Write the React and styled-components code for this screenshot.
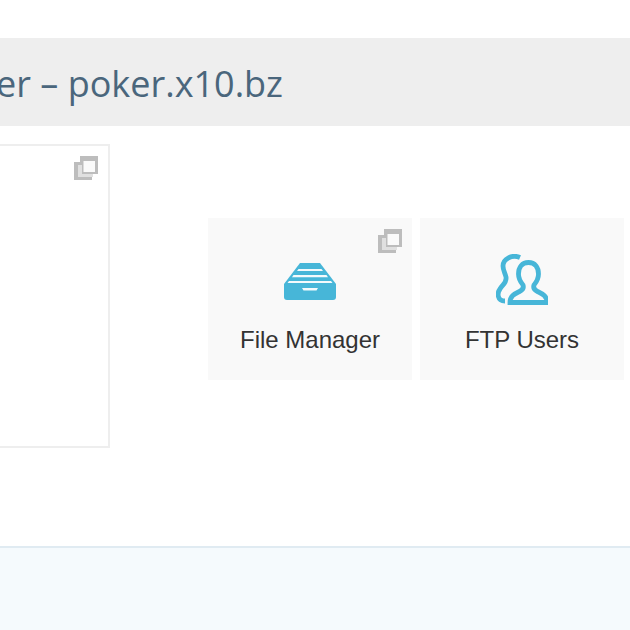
import styled, { createGlobalStyle } from "styled-components";

const GlobalStyle = createGlobalStyle`
  html, body {
    margin: 0;
    padding: 0;
    background: #fff;
  }
`;

function WindowIcon() {
  return (
    <WindowSvg viewBox="0 0 24 24">
      <path d="M6 0h18v18h-6v6H0V6h6z" fill="#bdbdbd" />
      <path d="M9.500 5h11.500v11H9.500z" fill="#fafafa" />
      <path d="M4 9h4v9h11v3H4z" fill="#e0e0e0" />
    </WindowSvg>
  );
}

function DrawerIcon() {
  return (
    <IconSvg viewBox="0 -3 52 40" width="52" height="40">
      <path d="M16 0h20l16 21H0z" fill="#47b6d8" />
      <path d="M14.500 6h23l1.500 2H13zM9.500 12h33l1.500 2.200H8zM5 18h42l1.500 2H3.500z" fill="#f4fafc" />
      <path d="M0 21h52v13q0 3-3 3H3q-3 0-3-3z" fill="#47b6d8" />
      <path d="M18 25h16l-1.500 2.500h-13z" fill="#f4fafc" />
    </IconSvg>
  );
}

function UsersIcon() {
  return (
    <IconSvg viewBox="0 0 52 52" width="52" height="52">
      <g fill="none" stroke="#47b6d8" strokeWidth="4.800">
        <path d="M24 3.500C16 0 7 5 7 12c0 4 2 7 3 11C11 29 6 31 4 35C1 39 1 47 9 47" />
        <path d="M32.500 8.500c-6.500 0-10 5-10 11.500 0 5 2 8 4.500 11 1 3-.5 5-3.500 6.500-4 2-9.500 4-9.500 11h37c0-7-5.500-9-9.500-11-3-1.500-4.500-3.500-3.500-6.500 2.500-3 4.500-6 4.500-11 0-6.500-3.500-11.500-10-11.500z" />
      </g>
    </IconSvg>
  );
}

export default function App() {
  return (
    <Page>
      <GlobalStyle />
      <TitleBar>
        <Title>er – poker.x10.bz</Title>
      </TitleBar>
      <Content>
        <Panel>
          <WindowSlot>
            <WindowIcon />
          </WindowSlot>
        </Panel>
        <Tiles>
          <Tile>
            <WindowSlot $tile>
              <WindowIcon />
            </WindowSlot>
            <IconWrap>
              <DrawerIcon />
            </IconWrap>
            <TileLabel>File Manager</TileLabel>
          </Tile>
          <Tile>
            <IconWrap>
              <UsersIcon />
            </IconWrap>
            <TileLabel>FTP Users</TileLabel>
          </Tile>
        </Tiles>
      </Content>
      <Footer />
    </Page>
  );
}

const Page = styled.div`
  width: 630px;
  height: 630px;
  overflow: hidden;
  padding-top: 38px;
  box-sizing: border-box;
  display: flex;
  flex-direction: column;
`;

const TitleBar = styled.div`
  height: 88px;
  box-sizing: border-box;
  padding: 3px 347px 0 0;
  background: #eeeeee;
  display: flex;
  align-items: center;
  justify-content: flex-end;
  flex-shrink: 0;
`;

const Title = styled.h1`
  margin: 0;
  font-family: "Open Sans", sans-serif;
  font-weight: 400;
  font-size: 36px;
  line-height: 44px;
  color: #4a667c;
  white-space: nowrap;
`;

const Content = styled.div`
  display: flex;
  align-items: flex-start;
  padding-top: 18px;
  height: 420px;
  box-sizing: border-box;
  flex-shrink: 0;
`;

const Panel = styled.div`
  position: relative;
  width: 110px;
  height: 304px;
  box-sizing: border-box;
  border: 2px solid #eeeeee;
  border-left: 0;
  flex-shrink: 0;
`;

const WindowSlot = styled.div`
  position: absolute;
  top: ${(p) => (p.$tile ? "11px" : "10px")};
  right: 10px;
  width: 24px;
  height: 24px;
`;

const WindowSvg = styled.svg`
  display: block;
  width: 24px;
  height: 24px;
  filter: blur(0.7px);
`;

const Tiles = styled.div`
  display: flex;
  gap: 8px;
  margin-left: 98px;
  margin-top: 74px;
`;

const Tile = styled.div`
  position: relative;
  width: 204px;
  height: 162px;
  background: #f9f9f9;
  display: flex;
  flex-direction: column;
  align-items: center;
`;

const IconWrap = styled.div`
  height: 52px;
  margin-top: 36px;
  display: flex;
  align-items: center;
  justify-content: center;
`;

const IconSvg = styled.svg`
  display: block;
  filter: blur(0.6px);
`;

const TileLabel = styled.div`
  margin-top: 19px;
  font-family: "Liberation Sans", Arial, sans-serif;
  font-size: 24px;
  line-height: 30px;
  color: #333333;
`;

const Footer = styled.div`
  flex: 1;
  background: #f5fafd;
  border-top: 2px solid #e0ebf2;
`;
